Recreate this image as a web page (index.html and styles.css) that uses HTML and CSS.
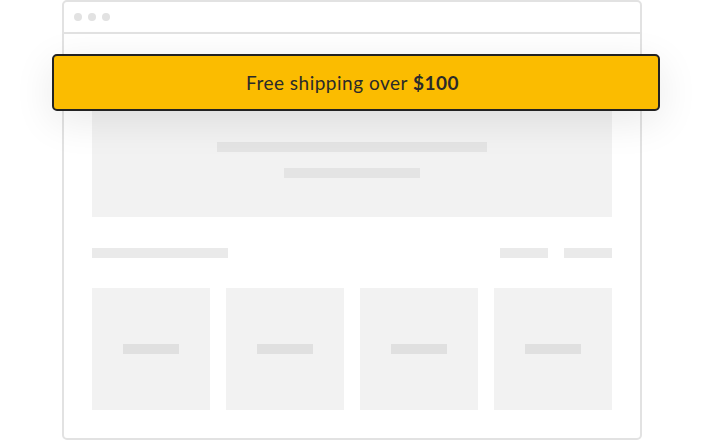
FILE: index.html
```html
<!DOCTYPE html>
<html>
<head>
<meta charset="utf-8">
<link rel="stylesheet" href="styles.css">
</head>
<body>
<div class="stage">
  <div class="frame">
    <div class="chrome">
      <span class="dot"></span><span class="dot"></span><span class="dot"></span>
    </div>
    <div class="page">
      <div class="hero">
        <div class="line line-wide"></div>
        <div class="line line-short"></div>
      </div>
      <div class="section-row">
        <div class="bar bar-title"></div>
        <div class="links">
          <div class="bar bar-link"></div>
          <div class="bar bar-link"></div>
        </div>
      </div>
      <div class="cards">
        <div class="card"><div class="card-bar"></div></div>
        <div class="card"><div class="card-bar"></div></div>
        <div class="card"><div class="card-bar"></div></div>
        <div class="card"><div class="card-bar"></div></div>
      </div>
    </div>
  </div>
  <div class="banner">Free shipping over <b>$100</b></div>
</div>
</body>
</html>
```
FILE: styles.css
```css
html, body {
  margin: 0;
  padding: 0;
  background: #ffffff;
}
.stage {
  position: relative;
  width: 712px;
  height: 440px;
  overflow: hidden;
}
.frame {
  box-sizing: border-box;
  margin-left: 62px;
  width: 580px;
  height: 440px;
  border: 2px solid #e2e2e2;
  border-radius: 5px;
  background: #fff;
}
.chrome {
  display: flex;
  align-items: center;
  gap: 6px;
  height: 30px;
  padding-left: 10px;
  border-bottom: 2px solid #e2e2e2;
}
.dot {
  width: 8px;
  height: 8px;
  border-radius: 50%;
  background: #e2e2e2;
}
.page {
  padding: 36px 28px 0;
  display: flex;
  flex-direction: column;
}
.hero {
  height: 147px;
  background: #f2f2f2;
  display: flex;
  flex-direction: column;
  align-items: center;
  padding-top: 72px;
  box-sizing: border-box;
  gap: 16px;
}
.line {
  height: 10px;
  background: #e4e4e4;
}
.line-wide { width: 270px; }
.line-short { width: 136px; }
.section-row {
  margin-top: 31px;
  display: flex;
  justify-content: space-between;
}
.links {
  display: flex;
  gap: 16px;
}
.bar {
  height: 10px;
  background: #eaeaea;
}
.bar-title { width: 136px; }
.bar-link { width: 48px; }
.cards {
  margin-top: 30px;
  display: grid;
  grid-template-columns: repeat(4, 1fr);
  gap: 16px;
}
.card {
  height: 122px;
  background: #f2f2f2;
  display: flex;
  align-items: center;
  justify-content: center;
}
.card-bar {
  width: 56px;
  height: 10px;
  background: #e0e0e0;
}
.banner {
  position: absolute;
  left: 52px;
  top: 54px;
  box-sizing: border-box;
  width: 608px;
  height: 57px;
  padding-right: 7px;
  border: 2px solid #222222;
  border-radius: 5px;
  background: #fbbc00;
  box-shadow: 0 10px 40px rgba(0, 0, 0, 0.09);
  display: flex;
  align-items: center;
  justify-content: center;
  font-family: Lato, "Open Sans", sans-serif;
  font-size: 19px;
  color: #2a2a2a;
  letter-spacing: 0.5px;
}
.banner b {
  font-weight: 700;
  margin-left: 5px;
}
```
